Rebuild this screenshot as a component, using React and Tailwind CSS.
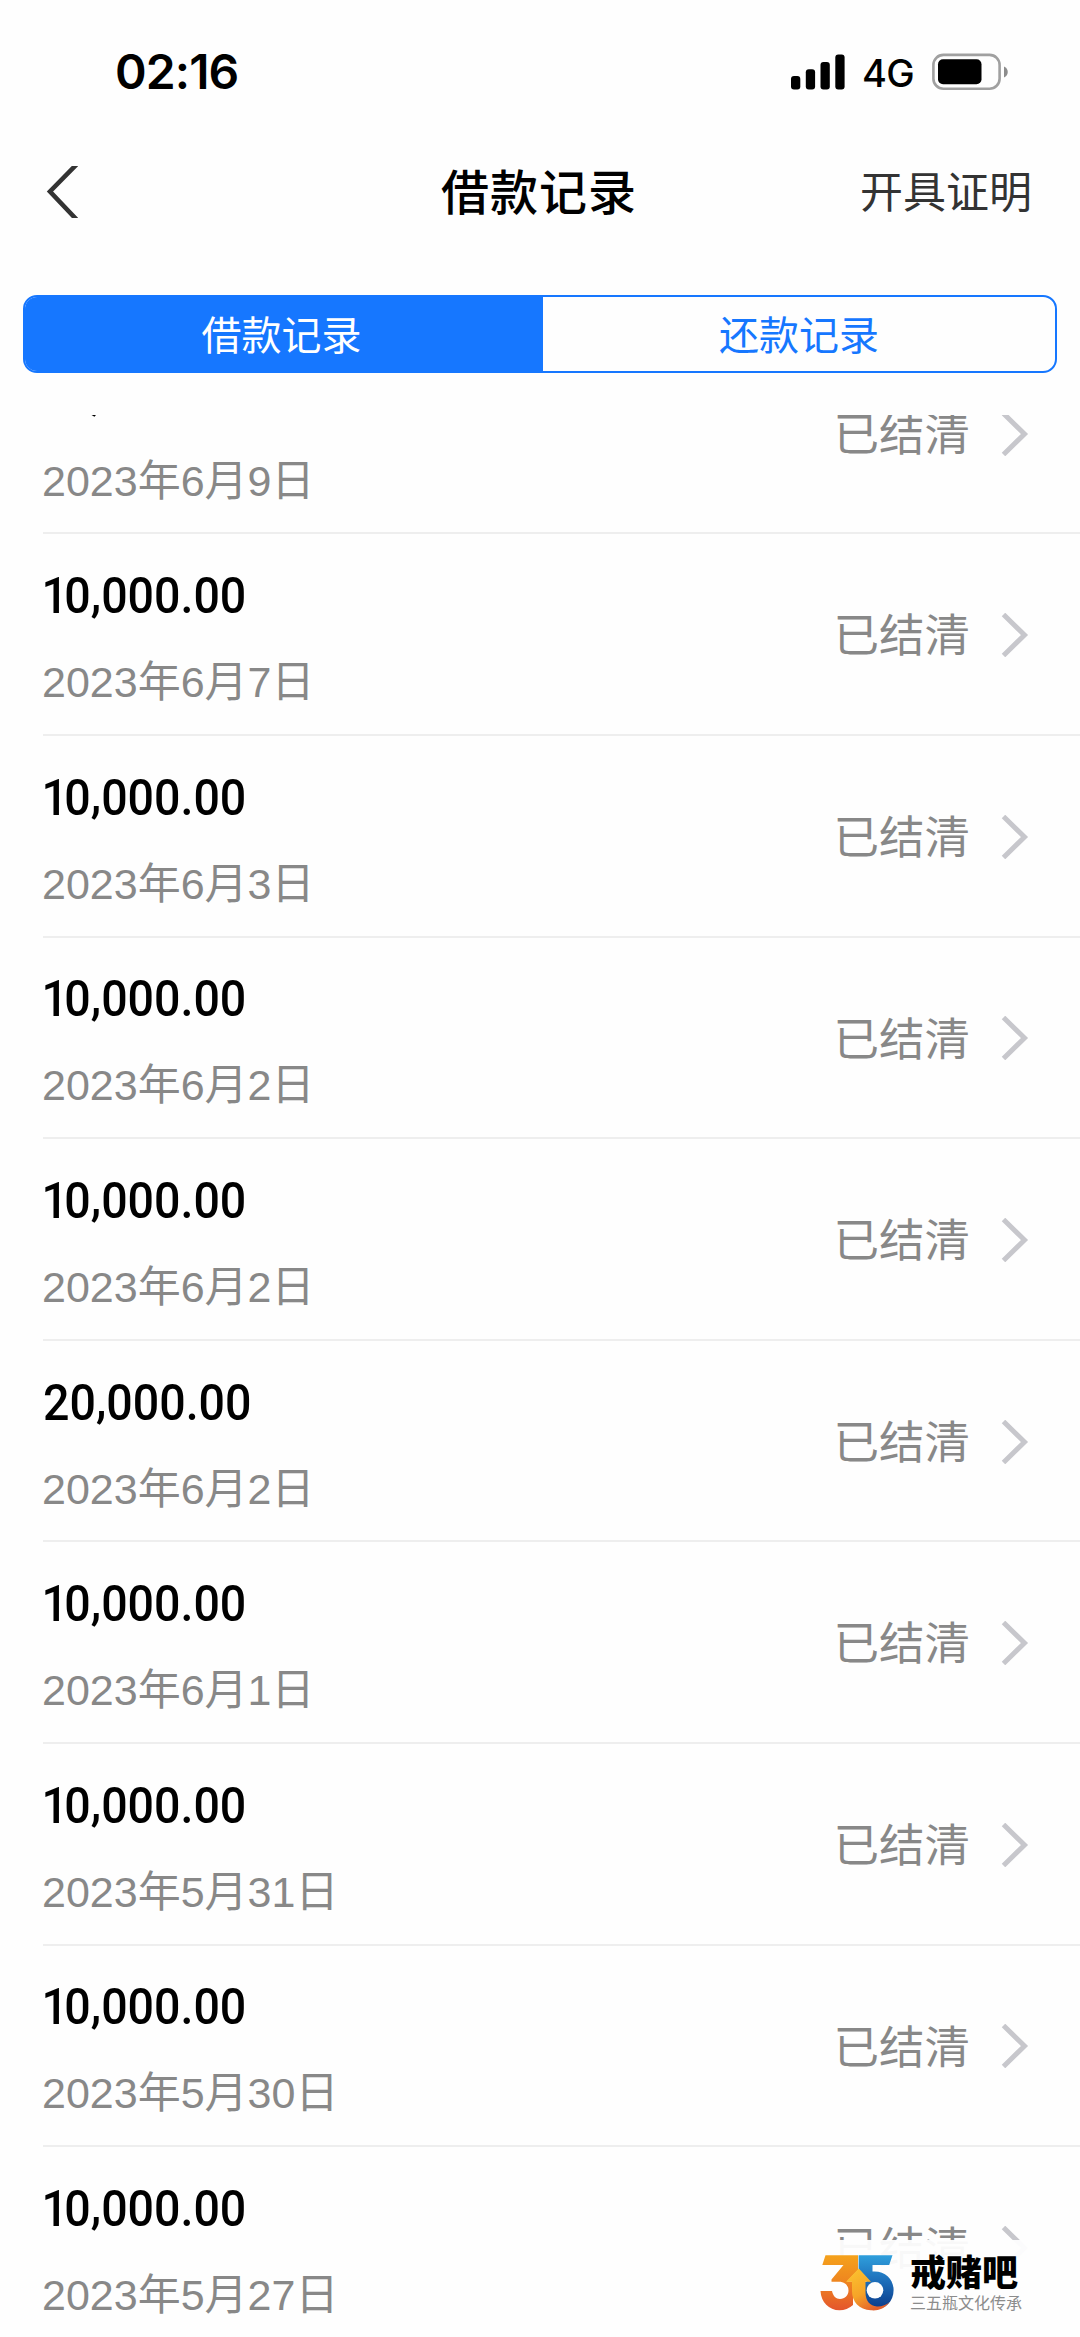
import React from "react";

const RECORDS = [
  ["10,000.00", "2023年6月9日"],
  ["10,000.00", "2023年6月7日"],
  ["10,000.00", "2023年6月3日"],
  ["10,000.00", "2023年6月2日"],
  ["10,000.00", "2023年6月2日"],
  ["20,000.00", "2023年6月2日"],
  ["10,000.00", "2023年6月1日"],
  ["10,000.00", "2023年5月31日"],
  ["10,000.00", "2023年5月30日"],
  ["10,000.00", "2023年5月27日"],
];

function StatusBar() {
  return (
    <div className="flex h-[144px] items-center justify-between pl-[115px] pr-[72px] font-['Inter',sans-serif] text-black">
      <span className="text-[48px] font-semibold leading-none tracking-[-0.9px]">02:16</span>
      <div className="flex items-center">
        <svg width="54" height="36" viewBox="0 0 54 36">
          <rect x="0" y="22" width="9.3" height="13.4" rx="3" />
          <rect x="14.8" y="15.3" width="9.3" height="20.1" rx="3" />
          <rect x="29.5" y="8" width="9.3" height="27.4" rx="3" />
          <rect x="44.3" y="0.6" width="9.3" height="34.8" rx="3" />
        </svg>
        <span className="ml-[17px] w-[52px] pt-[2px] text-[38px] font-medium leading-none tracking-[-0.6px]">4G</span>
        <svg className="ml-[18px]" width="76" height="38" viewBox="0 0 76 38">
          <rect x="1.4" y="1.9" width="66.2" height="33.8" rx="10" fill="none" stroke="#a0a0a0" strokeWidth="2.6" />
          <rect x="6" y="6.3" width="43.5" height="25" rx="5" />
          <path d="M72 13.5c5 2 5 9 0 11z" fill="#8c8c8c" />
        </svg>
      </div>
    </div>
  );
}

function Header() {
  return (
    <header className="grid h-[96px] grid-cols-[1fr_auto_1fr] items-center pl-[46px] pr-[48px]">
      <svg width="32" height="52" viewBox="0 0 32 52" fill="none" stroke="#333" strokeWidth="4.6">
        <path d="M31-2 4 25.5 31 54" />
      </svg>
      <h1 className="pt-[3px] text-[48px] font-medium leading-none tracking-[1px] text-black">借款记录</h1>
      <span className="justify-self-end pt-[2px] text-[43px] leading-none text-[#333]">开具证明</span>
    </header>
  );
}

function Tabs() {
  return (
    <div className="mx-[23px] mt-[55px] flex h-[78px] overflow-hidden rounded-[14px] border-[2.5px] border-[#1677ff] text-[40px] leading-none">
      <div className="flex w-[518px] items-center justify-center bg-[#1677ff] pr-[5px] pt-[4px] text-white">借款记录</div>
      <div className="flex flex-1 items-center justify-center pt-[4px] text-[#1677ff]">还款记录</div>
    </div>
  );
}

function Amount({ value }) {
  const leadingOne = value.startsWith("1");
  const [thousands, rest] = value.split(",");
  return (
    <span className="origin-left scale-x-[0.94] font-['Roboto',sans-serif] text-[49.5px] font-medium leading-[50px] text-black">
      {leadingOne ? <span className="-ml-[1.5px] -mr-[4px]">1</span> : null}
      {leadingOne ? thousands.slice(1) : thousands}
      <span className="relative -top-[2.5px]">,</span>
      {rest}
    </span>
  );
}

function Row({ amount, date }) {
  return (
    <li className="ml-[43px] flex h-[201.6px] shrink-0 items-center justify-between border-b-2 border-[#eee] pr-[51px]">
      <div className="flex flex-col gap-[36px] pt-[10px]">
        <Amount value={amount} />
        <span className="-ml-px text-[43px] leading-[50px] text-[#888]">{date}</span>
      </div>
      <div className="flex items-center gap-[31px] pt-[2px]">
        <span className="pt-[4px] text-[45.5px] leading-none text-[#888]">已结清</span>
        <svg width="28" height="44" viewBox="0 0 28 44" fill="none" stroke="#c7c7cc" strokeWidth="5">
          <path d="m2.5 1.5 21 20.5-21 20.5" />
        </svg>
      </div>
    </li>
  );
}

function Watermark() {
  return (
    <div className="absolute bottom-0 right-0 flex h-[97px] w-[270px] items-start bg-[#fefefe]/95 pl-[10px] pt-[15px]">
      <svg width="76" height="58" viewBox="0 0 76 58">
        <defs>
          <linearGradient id="three" x1="0" y1="0" x2="0" y2="1">
            <stop offset="0" stopColor="#f5a21c" />
            <stop offset="0.5" stopColor="#ee8420" />
            <stop offset="1" stopColor="#e4552c" />
          </linearGradient>
          <linearGradient id="five" x1="0" y1="0" x2="0" y2="1">
            <stop offset="0" stopColor="#2f9fdc" />
            <stop offset="0.5" stopColor="#1c6cb8" />
            <stop offset="1" stopColor="#0b3a88" />
          </linearGradient>
          <linearGradient id="arrow" x1="0" y1="0" x2="0.6" y2="1">
            <stop offset="0" stopColor="#fcc62f" />
            <stop offset="0.6" stopColor="#f6a428" />
            <stop offset="1" stopColor="#e4602a" />
          </linearGradient>
        </defs>
        <path
          d="M5.5 0.3H38V15L27 26.5H33V50Q27 55.3 19.5 55.3C9 55.3 1 47 0.5 36H12C13 41 16 44 20 44C25 44 28.5 40 28.5 35.5C28.5 30 24.5 26.7 19 26.7H11.5V24.5L23.5 10H2.3Z"
          fill="url(#three)"
        />
        <path
          d="M38.6 0.3H72.5L69.2 10H52.5V16.5C65 15.5 73.6 24 73.6 35C73.6 47 65 54 56 54C49 54 45 50 43 44V27H54A8.6 8.6 0 1 1 46.5 39.5V26L38.6 14Z"
          fill="url(#five)"
        />
        <circle cx="55" cy="35.3" r="8.3" fill="#fefefe" />
        <path
          d="M38.8 13.5 51 26.8H45.5V37C45.5 46 50 51 57 51.5C62 51.7 66 50 69.5 47C65 53.5 58 56 51 55.3C39 54.5 32 47 32 36V26.8H26Z"
          fill="url(#arrow)"
        />
      </svg>
      <div className="ml-[14px] flex flex-col">
        <span className="text-[36px] font-black leading-[38px] text-black">戒赌吧</span>
        <span className="mt-[3px] text-[16px] leading-[16px] text-[#8c8c8c]">三五瓶文化传承</span>
      </div>
    </div>
  );
}

export default function App() {
  return (
    <main className="relative flex h-[2337px] w-[1080px] flex-col overflow-hidden bg-[#fefefe] font-['Liberation_Sans','Noto_Sans_CJK_SC',sans-serif]">
      <StatusBar />
      <Header />
      <Tabs />
      <ul className="mt-[42.4px] flex flex-1 flex-col overflow-hidden">
        <li className="-mt-[82.6px]" />
        {RECORDS.map(([amount, date], i) => (
          <Row key={i} amount={amount} date={date} />
        ))}
      </ul>
      <Watermark />
    </main>
  );
}
